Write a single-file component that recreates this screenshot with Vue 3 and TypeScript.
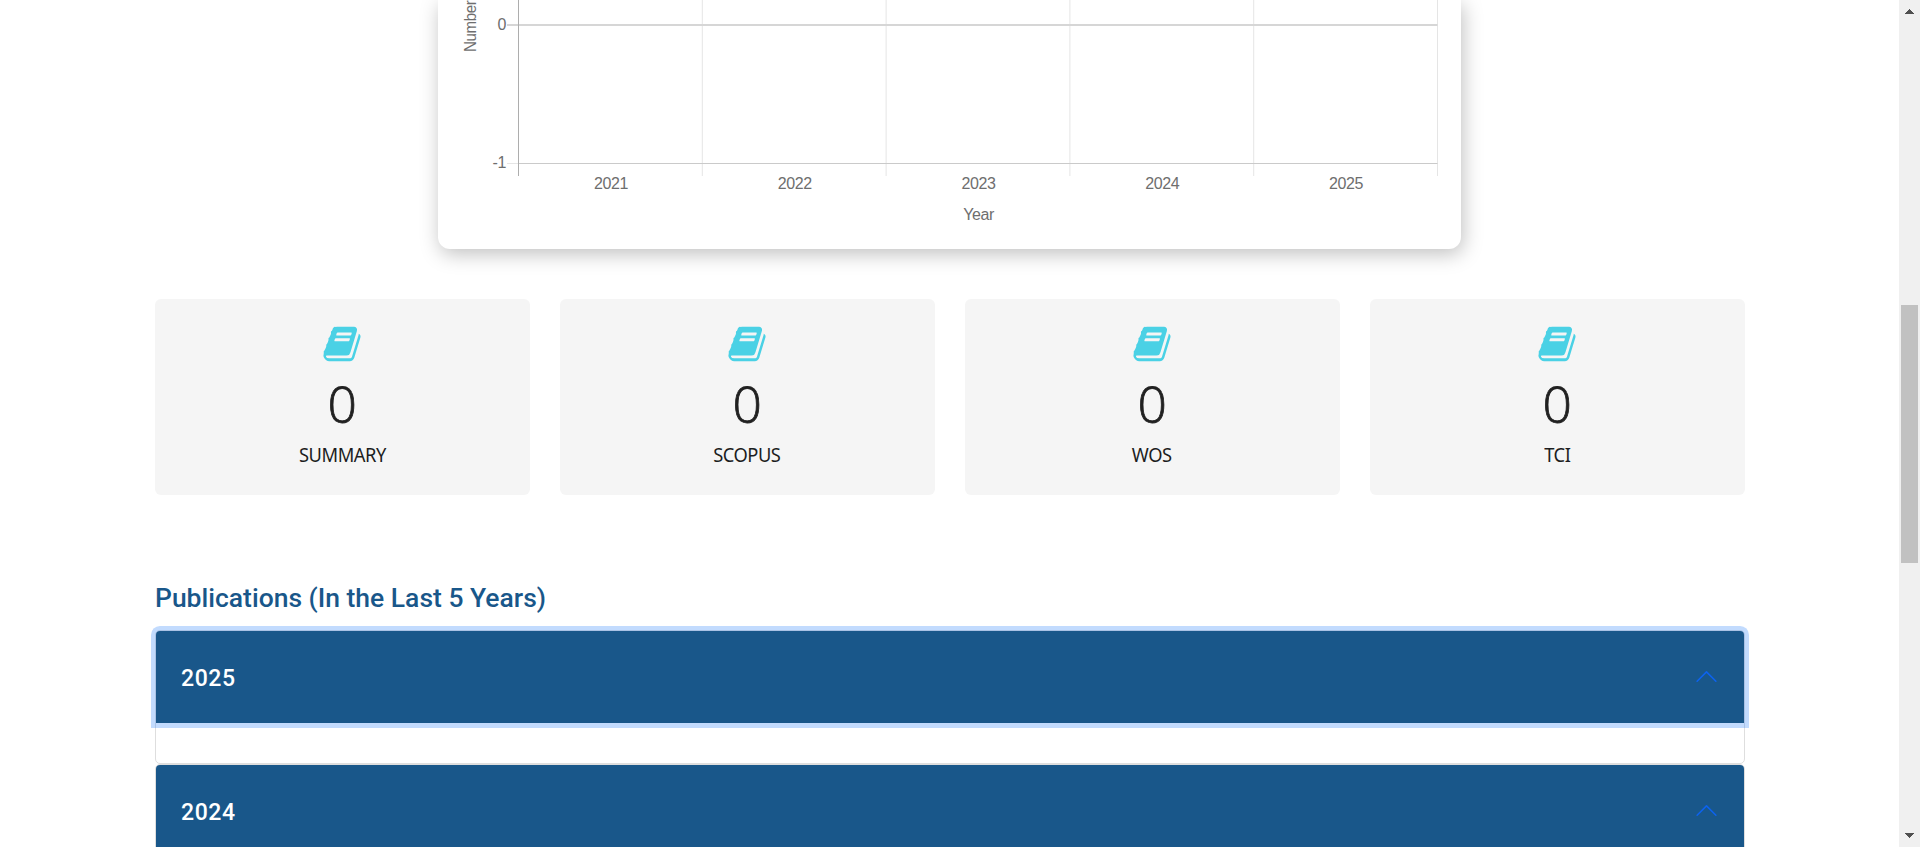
<script setup lang="ts">
interface Stat {
  label: string
  value: number
}

const stats: Stat[] = [
  { label: 'SUMMARY', value: 0 },
  { label: 'SCOPUS', value: 0 },
  { label: 'WOS', value: 0 },
  { label: 'TCI', value: 0 },
]

const chartYears: number[] = [2021, 2022, 2023, 2024, 2025]
const columnWidth = 183.8
const axisX = 80.5

const panels: { year: number; focused: boolean }[] = [
  { year: 2025, focused: true },
  { year: 2024, focused: false },
]
</script>

<template>
  <div class="window">
    <main class="page">
      <section class="chart-card">
        <svg class="chart" width="1023" height="249" viewBox="0 0 1023 249">
          <g class="grid">
            <line
              v-for="n in 5"
              :key="n"
              :x1="axisX + n * columnWidth"
              :x2="axisX + n * columnWidth"
              y1="0"
              y2="176"
            />
            <line x1="69" x2="80" y1="163.5" y2="163.5" />
          </g>
          <line class="zero" x1="69" x2="999.5" y1="25" y2="25" />
          <line class="base" x1="80" x2="999.5" y1="163.5" y2="163.5" />
          <line class="axis" x1="80.5" x2="80.5" y1="0" y2="176" />
          <text x="68" y="30" text-anchor="end">0</text>
          <text x="68" y="168" text-anchor="end">-1</text>
          <text
            v-for="(year, i) in chartYears"
            :key="year"
            :x="axisX + 0.5 + (i + 0.5) * columnWidth"
            y="189"
            text-anchor="middle"
          >{{ year }}</text>
          <text x="540.5" y="220" text-anchor="middle">Year</text>
          <text
            transform="translate(38 52) rotate(-90)"
            textLength="51.5"
            lengthAdjust="spacingAndGlyphs"
          >Number</text>
        </svg>
      </section>

      <section class="stats">
        <article v-for="stat in stats" :key="stat.label" class="stat">
          <svg class="book" viewBox="0 0 1792 1792">
            <path
              d="M1703 478q40 57 18 129l-275 906q-19 64-76.5 107.5t-122.5 43.5h-923q-77 0-148.500-53.5t-99.500-131.500q-24-67-2-127 0-4 3-27t4-37q1-8-3-21.500t-3-19.500q2-11 8-21t16.500-23.500 16.500-23.500q23-38 45-91.500t30-91.500q3-10 .5-30t-.5-28q3-11 17-28t17-23q21-36 42-92t25-90q1-9-2.500-32t.5-28q4-13 22-30.500t22-22.500q19-26 42.500-84.500t27.500-96.500q1-8-3-25.500t-2-26.500q2-8 9-18t18-23 17-21q8-12 16.500-30.500t15-35 16-36 19.500-32 26.500-23.500 36-11.500 47.500 5.500l-1 3q38-9 51-9h761q74 0 114 56t18 130l-274 906q-36 119-71.500 153.500t-128.500 34.500h-869q-27 0-38 15-11 16-1 43 24 70 144 70h923q29 0 56-15.500t35-41.500l300-987q7-22 5-57 38 15 59 43zm-1064 2q-4 13 2 22.500t20 9.500h608q13 0 25.500-9.500t16.500-22.500l21-64q4-13-2-22.500t-20-9.500h-608q-13 0-25.500 9.500t-16.500 22.500zm-83 256q-4 13 2 22.500t20 9.500h608q13 0 25.500-9.500t16.500-22.500l21-64q4-13-2-22.500t-20-9.500h-608q-13 0-25.500 9.500t-16.500 22.500z"
            />
          </svg>
          <div class="value">{{ stat.value }}</div>
          <div class="label">{{ stat.label }}</div>
        </article>
      </section>

      <h2 class="title"><span>Publications (In the Last 5 Years)</span></h2>

      <section class="accordion">
        <div v-for="panel in panels" :key="panel.year" class="item">
          <button class="header" :class="{ focused: panel.focused }" type="button">
            <span class="year">{{ panel.year }}</span>
            <svg class="chevron" viewBox="0 0 16 16">
              <path
                fill-rule="evenodd"
                d="M1.646 4.646a.5.5 0 0 1 .708 0L8 10.293l5.646-5.647a.5.5 0 0 1 .708.708l-6 6a.5.5 0 0 1-.708 0l-6-6a.5.5 0 0 1 0-.708z"
              />
            </svg>
          </button>
          <div class="body"></div>
        </div>
      </section>
    </main>

    <aside class="scrollbar">
      <svg class="arrow" viewBox="0 0 9 5"><path d="M4 0h1v1h1v1h1v1h1v1h1v1H0V4h1V3h1V2h1V1h1z" /></svg>
      <div class="thumb"></div>
      <svg class="arrow down" viewBox="0 0 9 5"><path d="M4 0h1v1h1v1h1v1h1v1h1v1H0V4h1V3h1V2h1V1h1z" /></svg>
    </aside>
  </div>
</template>

<style>
body {
  margin: 0;
  overflow: hidden;
}
</style>

<style scoped>
.window {
  display: flex;
  height: 847px;
  overflow: hidden;
  background: #fff;
}
.page {
  flex: 1;
  padding: 0 154px 0 155px;
}
.chart-card {
  box-sizing: border-box;
  width: 1023px;
  height: 249px;
  margin: 0 auto 50px 283px;
  border-radius: 0 0 12px 12px;
  background: #fff;
  box-shadow: 2px 5px 20px rgba(0, 0, 0, 0.25);
}
.chart {
  display: block;
}
.chart text {
  font: 16px "Liberation Sans", Arial, sans-serif;
  letter-spacing: -0.4px;
  fill: #6e6e6e;
}
.grid line {
  stroke: #e5e5e5;
}
.zero {
  stroke: #d6d6d6;
  stroke-width: 2;
}
.base {
  stroke: #cacaca;
}
.axis {
  stroke: #adadad;
}
.stats {
  display: grid;
  grid-template-columns: repeat(4, 375px);
  gap: 30px;
}
.stat {
  display: flex;
  flex-direction: column;
  align-items: center;
  box-sizing: border-box;
  height: 196px;
  padding-top: 25px;
  border-radius: 6px;
  background: #f5f5f5;
}
.book {
  width: 40px;
  height: 40px;
  margin-right: 1px;
  fill: #4ad1e5;
}
.value {
  margin-top: 15px;
  font: 300 50px/50px "Open Sans", "Noto Sans", sans-serif;
  color: #212121;
  -webkit-text-stroke: 0.8px #212121;
  transform: scaleX(1.03);
}
.label {
  margin: 11px 1px 0 0;
  font: 20px/30px "Noto Sans", sans-serif;
  letter-spacing: -0.5px;
  color: #1c1d21;
  transform: scaleX(0.915);
}
.title {
  height: 36px;
  margin: 85px 0 14px;
  font: 500 25.5px/36px Roboto, sans-serif;
  color: #19578a;
}
.title span {
  display: inline-block;
  transform: scaleX(1.038);
  transform-origin: left;
  white-space: nowrap;
}
.item {
  border: 1px solid #dedede;
  border-radius: 5px;
}
.header {
  display: flex;
  align-items: center;
  justify-content: space-between;
  box-sizing: border-box;
  width: 100%;
  height: 92px;
  padding: 0 25px;
  border: 0;
  border-radius: 4px 4px 0 0;
  background: #19578a;
  color: #fff;
}
.header.focused {
  box-shadow: 0 0 0 5px rgba(13, 110, 253, 0.25);
}
.year {
  padding-top: 3px;
  font: 500 23px/28px Roboto, sans-serif;
  letter-spacing: 0.6px;
}
.chevron {
  width: 25px;
  height: 25px;
  margin-bottom: 1px;
  fill: #0d63ee;
  transform: rotate(180deg);
}
.body {
  height: 40px;
}
.scrollbar {
  display: flex;
  flex-direction: column;
  align-items: center;
  justify-content: space-between;
  box-sizing: border-box;
  width: 21px;
  height: 847px;
  padding: 9px 0;
  background: #f0f0f0;
}
.arrow {
  width: 9px;
  height: 5px;
  fill: #505050;
}
.arrow.down {
  transform: rotate(180deg);
}
.thumb {
  width: 17px;
  height: 258px;
  margin: 291px 0 auto;
  background: #c1c1c1;
}
</style>
